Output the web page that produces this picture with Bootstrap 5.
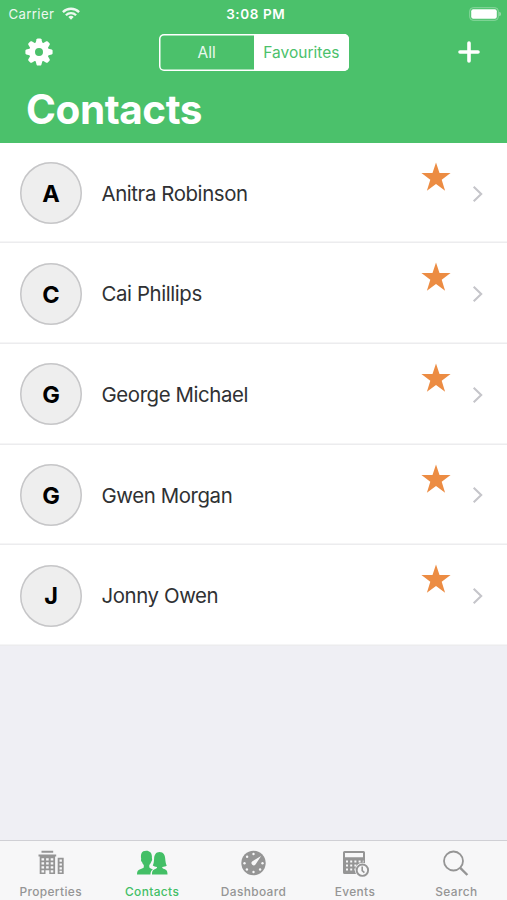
<!DOCTYPE html>
<html lang="en">
<head>
<meta charset="utf-8">
<meta name="viewport" content="width=device-width, initial-scale=1">
<title>Contacts</title>
<link href="https://cdn.jsdelivr.net/npm/bootstrap@5.3.0/dist/css/bootstrap.min.css" rel="stylesheet">
<style>
  body { font-family: Inter, "Liberation Sans", sans-serif; background: #efeff4; height: 900px; overflow: hidden; }
  svg { display: block; flex: none; }
  .top-area { background: #4bc16b; height: 142.5px; color: #fff; }
  .status-line { height: 28px; padding: 0 6px 0 8.5px; font-size: 13.2px; line-height: 28px; }
  .status-line > * { flex: 1 1 0; }
  .carrier { letter-spacing: .37px; opacity: .9; }
  .carrier svg { margin-left: 8px; margin-bottom: 1px; }
  .clock { font-weight: 600; font-size: 13.5px; letter-spacing: .6px; padding-left: 2px; }
  .tool-line { height: 48px; padding: 0 26px 0 25px; }
  .segments { width: 189.5px; height: 37px; box-shadow: inset 0 0 0 1.5px #fff; border-radius: 5px; overflow: hidden; margin-right: 2px; }
  .segments .btn { --bs-btn-color: #e9f9ee; --bs-btn-border-width: 0; --bs-btn-border-radius: 0; --bs-btn-padding-x: 0; --bs-btn-padding-y: 0; --bs-btn-font-size: 15.5px; --bs-btn-active-bg: #fff; --bs-btn-active-color: #4bc16b; flex: 1 1 0; padding-top: 1px; }
  .page-title { font-size: 40.5px; font-weight: 700; line-height: 50px; padding: 9px 0 0 26px; letter-spacing: -.45px; }
  .people { --bs-list-group-border-width: 0; --bs-list-group-border-radius: 0; }
  .person { height: 100.6px; padding: 0 24px 0 20px; color: #2f3133; position: relative; }
  .people { padding-top: .4px; background: #fff; }
  .person { box-shadow: inset 0 -1.5px #ececee; }
  .initial { width: 62px; height: 62px; background: #eee; box-shadow: inset 0 0 0 1.5px #c6c6c8; color: #000; font-size: 23.5px; font-weight: 700; padding-top: 1px; }
  .person-name { font-size: 20.4px; margin-left: 19.5px; padding-top: 2px; letter-spacing: -.4px; }
  .person-next { margin-top: 1px; }
  .star { margin: 19px 21px 0 0; }
  .tabs { height: 60px; background: #f7f7f8; border-top: 1px solid #d0d0d5; color: #959595; }
  .tabs .nav-link { --bs-nav-link-padding-x: 0; --bs-nav-link-padding-y: 0; padding-top: 5.5px; color: inherit; font-size: 11.9px; font-weight: 500; line-height: 14px; letter-spacing: .38px; }
  .tabs .nav-link.active { color: #43bf66; }
  .tabs svg { margin-bottom: 6px; }
</style>
</head>
<body class="d-flex flex-column">
<header class="top-area flex-shrink-0">
  <div class="status-line d-flex align-items-center">
    <div class="carrier d-flex align-items-center">Carrier
      <svg width="18" height="14" viewBox="0 0 18 14" fill="none" stroke="#fff" stroke-width="2.3"><path d="M.9 5.1a11.5 11.5 0 0 1 16.2 0M3.9 8.2a7.2 7.2 0 0 1 10.2 0"/><path d="M9 12.8 6.3 10.1a3.8 3.8 0 0 1 5.4 0z" fill="#fff" stroke="none"/></svg>
    </div>
    <div class="clock text-center">3:08 PM</div>
    <div class="d-flex justify-content-end">
      <svg width="32" height="14" viewBox="0 0 32 14"><rect x=".7" y=".7" width="28.6" height="12.6" rx="3.4" fill="none" stroke="#8ad79f" stroke-width="1"/><rect x="2.2" y="2.2" width="25.6" height="9.6" rx="2" fill="#fff"/><path d="M30.3 4.7v4.6q1.6-.6 1.6-2.3t-1.6-2.3z" fill="#a5dfb5"/></svg>
    </div>
  </div>
  <div class="tool-line d-flex align-items-center justify-content-between">
    <svg width="28" height="28" viewBox="-14 -14 28 28" fill="#fff">
      <circle r="7" fill="none" stroke="#fff" stroke-width="6"/>
      <defs><path id="tooth" d="M-3.5-8.5-2.4-12.7Q-2.1-13.6-1.2-13.6H1.2Q2.1-13.6 2.4-12.7L3.5-8.5z"/></defs>
      <use href="#tooth"/><use href="#tooth" transform="rotate(45)"/><use href="#tooth" transform="rotate(90)"/><use href="#tooth" transform="rotate(135)"/><use href="#tooth" transform="rotate(180)"/><use href="#tooth" transform="rotate(225)"/><use href="#tooth" transform="rotate(270)"/><use href="#tooth" transform="rotate(315)"/>
    </svg>
    <div class="segments d-flex">
      <button class="btn" type="button">All</button>
      <button class="btn active" type="button">Favourites</button>
    </div>
    <svg width="24" height="24" viewBox="0 0 24 24" stroke="#fff" stroke-width="3.6" stroke-linecap="round"><path d="M12 3v18M3 12h18"/></svg>
  </div>
  <h1 class="page-title m-0">Contacts</h1>
</header>

<svg width="0" height="0" class="position-absolute">
  <symbol id="star" viewBox="0 0 30 29"><path d="M15 .4 18.5 10.9H29.6L20.7 17.8 24.1 28.7 15 22 5.9 28.7 9.3 17.8.4 10.9H11.5z" fill="#ec8c43"/></symbol>
  <symbol id="chevron" viewBox="0 0 11 18"><path d="M1.7 1.7 9.2 9 1.7 16.3" fill="none" stroke="#c5c5ca" stroke-width="2.1"/></symbol>
</svg>

<main class="flex-grow-1">
  <div class="people list-group">
    <a class="person list-group-item d-flex align-items-center"><span class="initial rounded-circle d-flex align-items-center justify-content-center">A</span><span class="person-name me-auto">Anitra Robinson</span><svg class="star align-self-start" width="30" height="29"><use href="#star"/></svg><svg class="person-next" width="11" height="18"><use href="#chevron"/></svg></a>
    <a class="person list-group-item d-flex align-items-center"><span class="initial rounded-circle d-flex align-items-center justify-content-center">C</span><span class="person-name me-auto">Cai Phillips</span><svg class="star align-self-start" width="30" height="29"><use href="#star"/></svg><svg class="person-next" width="11" height="18"><use href="#chevron"/></svg></a>
    <a class="person list-group-item d-flex align-items-center"><span class="initial rounded-circle d-flex align-items-center justify-content-center">G</span><span class="person-name me-auto">George Michael</span><svg class="star align-self-start" width="30" height="29"><use href="#star"/></svg><svg class="person-next" width="11" height="18"><use href="#chevron"/></svg></a>
    <a class="person list-group-item d-flex align-items-center"><span class="initial rounded-circle d-flex align-items-center justify-content-center">G</span><span class="person-name me-auto">Gwen Morgan</span><svg class="star align-self-start" width="30" height="29"><use href="#star"/></svg><svg class="person-next" width="11" height="18"><use href="#chevron"/></svg></a>
    <a class="person list-group-item d-flex align-items-center"><span class="initial rounded-circle d-flex align-items-center justify-content-center">J</span><span class="person-name me-auto">Jonny Owen</span><svg class="star align-self-start" width="30" height="29"><use href="#star"/></svg><svg class="person-next" width="11" height="18"><use href="#chevron"/></svg></a>
  </div>
</main>

<nav class="tabs nav nav-justified flex-shrink-0 flex-nowrap">
  <a class="nav-link nav-item d-flex flex-column align-items-center">
    <svg width="36" height="32" viewBox="0.5 0 36 32" fill="currentColor"><path fill-rule="evenodd" d="M9 3.8H20.7V5.7H9zM6 7.6H23.7V9.6H22.6V27H16.8V23.3H13V27H7.2V9.6H6zM9 11.2v2.2h2.6v-2.2zm4.6 0v2.2h2.6v-2.2zm4.6 0v2.2h2.6v-2.2zM9 15.2v2.2h2.6v-2.2zm4.6 0v2.2h2.6v-2.2zm4.6 0v2.2h2.6v-2.2zM9 19.2v2.2h2.6v-2.2zm4.6 0v2.2h2.6v-2.2zm4.6 0v2.2h2.6v-2.2zM9 23.2v2.2h2.6v-2.2zm9.2 0v2.2h2.6v-2.2zM25.2 10.8H31.2V27H25.2zM27 12.6v2.2h2.4v-2.2zm0 3.8v2.2h2.4v-2.2zm0 3.8v2.2h2.4v-2.2zm0 3.6v1.6h2.4v-1.6z"/></svg>
    Properties</a>
  <a class="nav-link nav-item active d-flex flex-column align-items-center bg-transparent">
    <svg width="36" height="32" viewBox="0 0 36 32" fill="currentColor"><path d="M12.3 3.7c3.4 0 5.6 2.2 5.6 5.6 0 1.3 0 2.2.2 3 .2 1.4-.6 1.7-.9 2.6-.5 1.4-1.3 2.4-1.9 3.2v2.1c.7 1.1 2.1 1.6 3.6 2.1-1.6 1-2.3 2.7-2.5 5.3H3c0-3.1.7-4.5 3.2-5.4 1.9-.7 3.1-1 3.6-2v-2.1c-.8-.8-1.5-2-1.8-3.2-.9-.6-1.2-1.8-.9-2.7l.1-.2C6.4 7 7.5 3.7 12.3 3.7z"/><path d="M25.6 4.9c4 0 5.3 3 5.6 6.5.3 3.2.5 5.3 1.6 7.2-1.2 1-2.8 1.4-4.5 1.4v1c.9 1 4.6 1.3 4.9 3.7.2 1 .3 1.9.3 2.9H18c0-4.4 1.2-4.8 3.4-5.7 1-.4 1.5-.8 1.6-1.4v-.6c-1.7 0-3.1-.4-4.2-1.3 1-2.1 1.1-4 1.3-6.9.2-4 1.7-6.8 5.5-6.8z"/></svg>
    Contacts</a>
  <a class="nav-link nav-item d-flex flex-column align-items-center">
    <svg width="36" height="32" viewBox="0.5 0 36 32"><circle cx="18" cy="16" r="12.2" fill="currentColor"/><g fill="#f7f7f8"><circle cx="18" cy="7" r="1.2"/><circle cx="11.6" cy="9.8" r="1.2"/><circle cx="9" cy="16.3" r="1.2"/><circle cx="11.4" cy="22.5" r="1.2"/><circle cx="18" cy="25" r="1.2"/><circle cx="24.6" cy="22.5" r="1.2"/><circle cx="27" cy="16.3" r="1.2"/><path d="m25.6 8.9-5.6 8.6a2.3 2.3 0 1 1-3.4-3.1z"/></g></svg>
    Dashboard</a>
  <a class="nav-link nav-item d-flex flex-column align-items-center">
    <svg width="36" height="32" viewBox="0 0 36 32"><path fill="currentColor" fill-rule="evenodd" d="M7.5 4H26.5Q28 4 28 5.5V27H7.5Q6 27 6 25.5V5.5Q6 4 7.5 4zM8 6V10.3H26V6z"/><g stroke="#f7f7f8" stroke-width="2" stroke-dasharray="2 2.2"><path d="M9 14.5H26.5M9 18.5H22M9 22.5H18"/></g><circle cx="25.4" cy="23.2" r="7.4" fill="#f7f7f8"/><circle cx="25.4" cy="23.2" r="5.7" fill="#f7f7f8" stroke="currentColor" stroke-width="1.9"/><path d="M25.2 19.6v4l2.2 2" fill="none" stroke="currentColor" stroke-width="1.6"/></svg>
    Events</a>
  <a class="nav-link nav-item d-flex flex-column align-items-center">
    <svg width="36" height="32" viewBox="0 0 36 32" fill="none" stroke="currentColor"><circle cx="15.5" cy="14" r="9.5" stroke-width="1.8"/><path d="m22.2 20.8 7.2 7.2" stroke-width="2.4"/></svg>
    Search</a>
</nav>
<script src="https://cdn.jsdelivr.net/npm/bootstrap@5.3.0/dist/js/bootstrap.bundle.min.js"></script>
</body>
</html>
